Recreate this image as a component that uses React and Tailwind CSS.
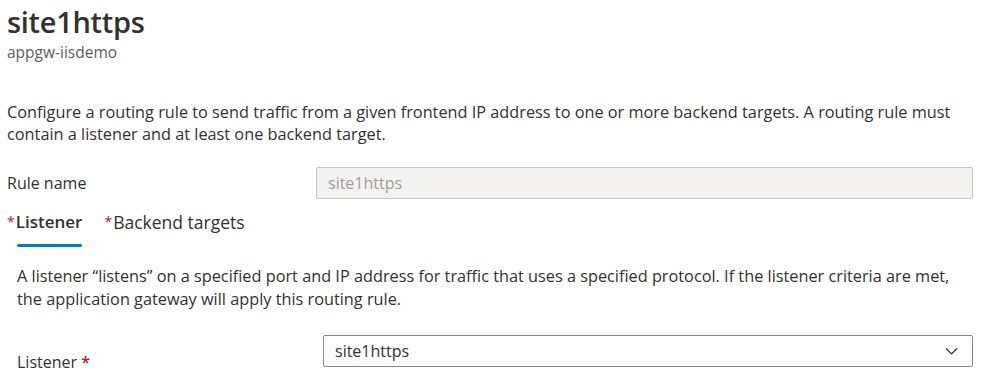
import React from "react";

export default function App() {
  return (
    <div className="w-[998px] h-[384px] overflow-hidden bg-white text-[#323130]" style={{ fontFamily: '"Open Sans", "Noto Sans", sans-serif' }}>
      <div className="pl-[7px] pr-[25px]">
        <h1 className="pt-[2px] text-[29px] leading-[40px] font-semibold tracking-[-0.3px]">site1https</h1>
        <div className="mt-[1px] text-[15.5px] leading-[18px] text-[#605e5c]">appgw-iisdemo</div>

        <p className="mt-[40px] text-[16.3px] leading-[22px] whitespace-nowrap">
          Configure a routing rule to send traffic from a given frontend IP address to one or more backend targets. A routing rule must
          <br />
          contain a listener and at least one backend target.
        </p>

        <div className="mt-[22px] flex items-center">
          <div className="w-[309px] text-[16px]">Rule name</div>
          <div className="flex-1 h-[32px] rounded-[2px] border border-[#c8c6c4] bg-[#f3f2f1] px-[11px] flex items-center text-[16px] text-[#a19f9d]">
            site1https
          </div>
        </div>

        <div className="mt-[9px] flex items-start gap-[22px]">
          <div className="flex flex-col">
            <div className="flex items-start text-[17px] leading-[28px] font-semibold">
              <span className="text-[#a4262c] text-[14px] leading-[28px] font-normal mr-[1px]">*</span>
              <span>Listener</span>
            </div>
            <div className="ml-[10px] mt-[8px] h-[3px] rounded-full bg-[#0078d4]"></div>
          </div>
          <div className="flex items-start text-[17.5px] leading-[28px]">
            <span className="text-[#a4262c] text-[14px] leading-[28px] mr-[1px]">*</span>
            <span>Backend targets</span>
          </div>
        </div>

        <div className="pl-[10px]">
          <p className="mt-[18px] text-[16.3px] leading-[23px] whitespace-nowrap">
            A listener “listens” on a specified port and IP address for traffic that uses a specified protocol. If the listener criteria are met,
            <br />
            the application gateway will apply this routing rule.
          </p>

          <div className="mt-[24px] flex items-start">
            <div className="w-[306px] pt-[16px] text-[16px] leading-[22px]">
              Listener <span className="text-[#a4262c] font-semibold">*</span>
            </div>
            <div className="flex-1 h-[32px] rounded-[2px] border border-[#8a8886] bg-white pl-[11px] pr-[14px] flex items-center justify-between text-[16px]">
              <span>site1https</span>
              <svg width="13" height="8" viewBox="0 0 13 8" fill="none">
                <path d="M1 1.5l5.5 5.5 5.5-5.5" stroke="#323130" strokeWidth="1.2" />
              </svg>
            </div>
          </div>
        </div>
      </div>
    </div>
  );
}
